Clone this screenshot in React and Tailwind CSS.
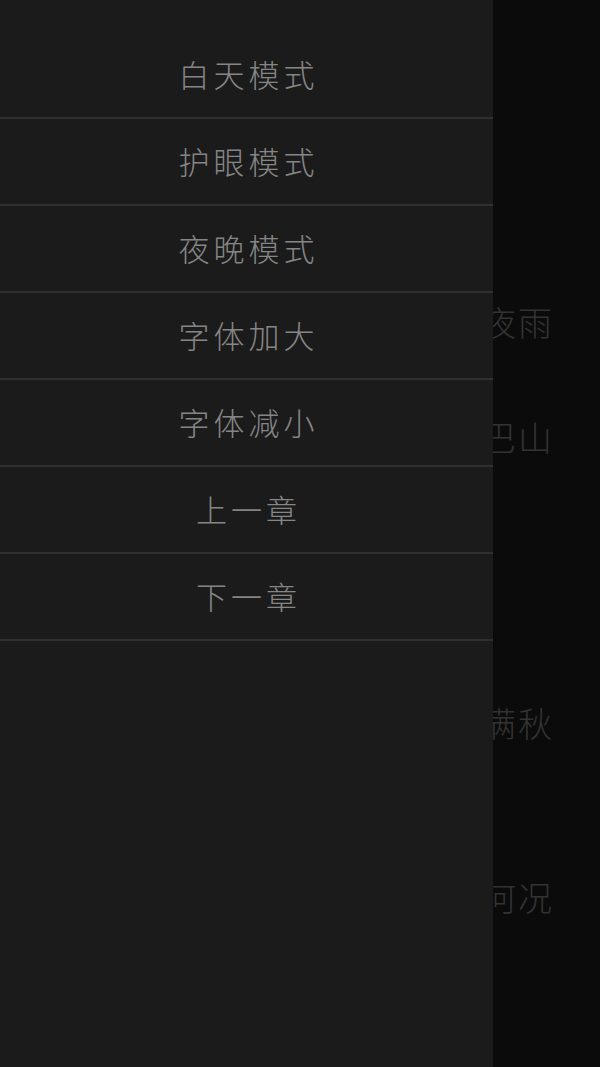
import React from "react";

const items = ["白天模式", "护眼模式", "夜晚模式", "字体加大", "字体减小", "上一章", "下一章"];

const bgLines = [
  { t: "巴山夜雨", y: "mt-[300px]" },
  { t: "何当巴山", y: "mt-[71px]" },
  { t: "夜雨满秋", y: "mt-[242px]" },
  { t: "却话何况", y: "mt-[130px]" },
];

export default function App() {
  return (
    <div
      className="relative w-[600px] h-[1067px] overflow-hidden bg-[#0b0b0b]"
      style={{ fontFamily: '"Noto Sans CJK SC", "Noto Sans", sans-serif' }}
    >
      <div className="flex flex-col items-end pr-[46px] text-[#333333] text-[34px] font-light leading-[44px] tracking-[2px]">
        {bgLines.map((l, i) => (
          <div key={i} className={l.y}>{l.t}</div>
        ))}
      </div>
      <div className="absolute left-0 top-0 h-full w-[493px] bg-[#1b1b1b] pt-[32px] flex flex-col">
        {items.map((it) => (
          <div
            key={it}
            className="h-[87px] flex items-center justify-center border-b-2 border-[#303030] text-[#868686] text-[31px] font-light tracking-[4px] pl-[4px]"
          >
            {it}
          </div>
        ))}
      </div>
    </div>
  );
}
